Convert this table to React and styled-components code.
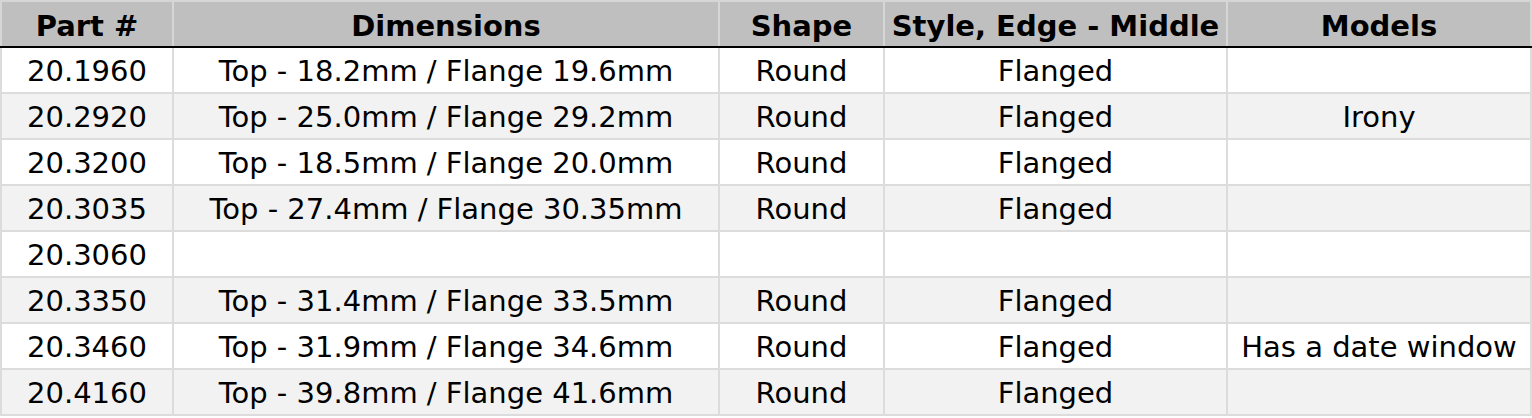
import React from 'react'
import styled, {createGlobalStyle} from 'styled-components'

const rows = [
    ['20.1960', 'Top - 18.2mm / Flange 19.6mm', 'Round', 'Flanged', ''],
    ['20.2920', 'Top - 25.0mm / Flange 29.2mm', 'Round', 'Flanged', 'Irony'],
    ['20.3200', 'Top - 18.5mm / Flange 20.0mm', 'Round', 'Flanged', ''],
    ['20.3035', 'Top - 27.4mm / Flange 30.35mm', 'Round', 'Flanged', ''],
    ['20.3060', '', '', '', ''],
    ['20.3350', 'Top - 31.4mm / Flange 33.5mm', 'Round', 'Flanged', ''],
    ['20.3460', 'Top - 31.9mm / Flange 34.6mm', 'Round', 'Flanged', 'Has a date window'],
    ['20.4160', 'Top - 39.8mm / Flange 41.6mm', 'Round', 'Flanged', ''],
]

const columns = [
    {title: 'Part #', width: 172},
    {title: 'Dimensions', width: 546},
    {title: 'Shape', width: 165},
    {title: 'Style, Edge - Middle', width: 343},
    {title: 'Models', width: 304},
]

function App() {
    return (
        <>
            <GlobalStyle />
            <Table>
                <colgroup>
                    {columns.map(c => <col key={c.title} style={{width: c.width}} />)}
                </colgroup>
                <thead>
                    <tr>
                        {columns.map(c => <Th key={c.title}>{c.title}</Th>)}
                    </tr>
                </thead>
                <tbody>
                    {rows.map((r, i) => (
                        <Row key={r[0]} shaded={i % 2 === 1}>
                            {r.map((cell, j) => <Td key={j}>{cell}</Td>)}
                        </Row>
                    ))}
                </tbody>
            </Table>
        </>
    )
}

export default App

const GlobalStyle = createGlobalStyle`
    body{
        margin: 0;
        background: #fff;
        font-family: "DejaVu Sans", Verdana, sans-serif;
    }
`

const Table = styled.table`
    width: 1531px;
    table-layout: fixed;
    border-collapse: collapse;
    color: #000;
    font-size: 29px;
`

const Th = styled.th`
    height: 41px;
    padding: 3px 0 0;
    background: #bfbfbf;
    font-weight: bold;
    text-align: center;
    border: 2px solid #d6d6d6;
    border-bottom: 2px solid #000;
    white-space: nowrap;
`

const Row = styled.tr`
    background: ${props => props.shaded ? '#f2f2f2' : '#fff'};
`

const Td = styled.td`
    height: 42px;
    padding: 2px 0 0;
    text-align: center;
    border: 2px solid #dcdcdc;
    white-space: nowrap;
`
